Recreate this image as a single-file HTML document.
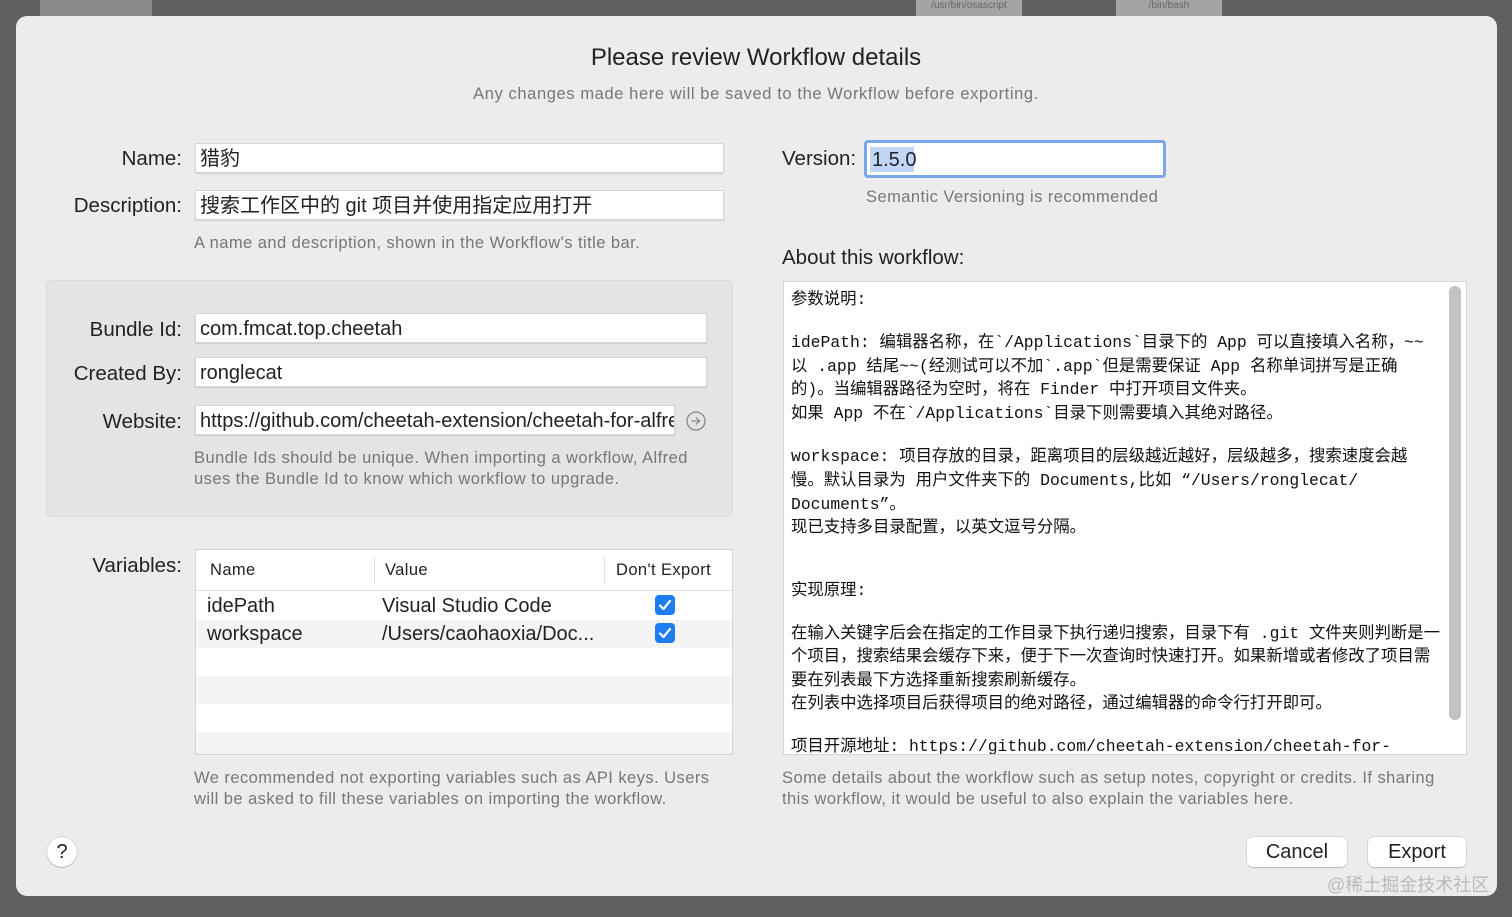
<!DOCTYPE html>
<html><head><meta charset="utf-8"><style>
*{margin:0;padding:0;box-sizing:border-box}
body{width:1512px;height:917px;background:#5f5f61;position:relative;overflow:hidden;font-family:"Liberation Sans","Noto Sans CJK SC",sans-serif;color:#222}
.a{position:absolute;white-space:nowrap}
.dlg{position:absolute;left:16px;top:16px;width:1481px;height:880px;background:#ececec;border-radius:11px}
.lbl{position:absolute;font-size:20.5px;color:#222;text-align:right;width:180px}
.inp{position:absolute;background:#fff;border:1px solid #d6d6d6;box-shadow:0 1px 1px rgba(0,0,0,.12);font-size:20px;padding-left:4px;line-height:30px;overflow:hidden;white-space:nowrap}
.help{position:absolute;font-size:16.5px;letter-spacing:.45px;color:#777;line-height:21px}
.m{position:absolute;left:791px;font-family:"Liberation Mono","Noto Sans CJK SC",monospace;font-size:16.4px;white-space:nowrap;line-height:24px;color:#111}
.btn{position:absolute;background:#fff;border-radius:6px;box-shadow:0 0 0 .5px rgba(0,0,0,.15),0 1px 1px rgba(0,0,0,.15);font-size:20px;text-align:center;line-height:30px;color:#222}
.cb{position:absolute;width:20px;height:20px;background:#1e7cf4;border-radius:4px}
</style></head><body>
<div class="a" style="left:40px;top:0;width:112px;height:16px;background:#8a8a8c"></div>
<div class="a" style="left:916px;top:0;width:106px;height:16px;background:#a4a4a4;font-size:10px;color:#666;text-align:center;line-height:12px">/usr/bin/osascript</div>
<div class="a" style="left:1116px;top:0;width:106px;height:16px;background:#a4a4a4;font-size:10px;color:#666;text-align:center;line-height:12px">/bin/bash</div>
<div class="dlg"></div>
<div class="a" style="left:0;width:1512px;top:44px;text-align:center;font-size:24px;color:#222">Please review Workflow details</div>
<div class="a" style="left:0;width:1512px;top:85px;text-align:center;font-size:16.5px;letter-spacing:.6px;color:#777">Any changes made here will be saved to the Workflow before exporting.</div>

<div class="lbl" style="left:2px;top:147px">Name:</div>
<div class="inp" style="left:195px;top:143px;width:529px;height:30px">猎豹</div>
<div class="lbl" style="left:2px;top:194px">Description:</div>
<div class="inp" style="left:195px;top:190px;width:529px;height:30px">搜索工作区中的 git 项目并使用指定应用打开</div>
<div class="help" style="left:194px;top:233px">A name and description, shown in the Workflow's title bar.</div>

<div class="a" style="left:46px;top:280px;width:687px;height:237px;background:#e4e4e4;border:1px solid #dadada;border-radius:5px"></div>
<div class="lbl" style="left:2px;top:318px">Bundle Id:</div>
<div class="inp" style="left:195px;top:313px;width:512px;height:30px">com.fmcat.top.cheetah</div>
<div class="lbl" style="left:2px;top:362px">Created By:</div>
<div class="inp" style="left:195px;top:357px;width:512px;height:30px">ronglecat</div>
<div class="lbl" style="left:2px;top:410px">Website:</div>
<div class="inp" style="left:195px;top:405px;width:480px;height:30px">https://github.com/cheetah-extension/cheetah-for-alfred</div>
<svg class="a" style="left:685px;top:410px" width="22" height="22" viewBox="0 0 22 22"><circle cx="11" cy="11" r="9" fill="none" stroke="#888" stroke-width="1.3"/><path d="M6.5 11h8M11 7.5l3.5 3.5-3.5 3.5" fill="none" stroke="#888" stroke-width="1.3"/></svg>
<div class="help" style="left:194px;top:448px">Bundle Ids should be unique. When importing a workflow, Alfred<br>uses the Bundle Id to know which workflow to upgrade.</div>

<div class="lbl" style="left:2px;top:554px">Variables:</div>
<div class="a" style="left:195px;top:549px;width:538px;height:206px;background:#fff;border:1px solid #d4d4d4"></div>
<div class="a" style="left:196px;top:590px;width:536px;height:1px;background:#e2e2e2"></div>
<div class="a" style="left:196px;top:620px;width:536px;height:28px;background:#f4f4f4"></div>
<div class="a" style="left:196px;top:676px;width:536px;height:28px;background:#f4f4f4"></div>
<div class="a" style="left:196px;top:732px;width:536px;height:22px;background:#f4f4f4"></div>
<div class="a" style="left:374px;top:556px;width:1px;height:28px;background:#e4e4e4"></div>
<div class="a" style="left:604px;top:556px;width:1px;height:28px;background:#e4e4e4"></div>
<div class="a" style="left:210px;top:561px;font-size:16.5px;letter-spacing:.4px">Name</div>
<div class="a" style="left:385px;top:561px;font-size:16.5px;letter-spacing:.4px">Value</div>
<div class="a" style="left:616px;top:561px;font-size:16.5px;letter-spacing:.4px">Don't Export</div>
<div class="a" style="left:207px;top:595px;font-size:20px">idePath</div>
<div class="a" style="left:382px;top:595px;font-size:20px">Visual Studio Code</div>
<div class="a" style="left:207px;top:623px;font-size:20px">workspace</div>
<div class="a" style="left:382px;top:623px;font-size:20px">/Users/caohaoxia/Doc...</div>
<div class="cb" style="left:655px;top:595px"><svg width="20" height="20"><path d="M5 10.5l3.5 3.5 6.5-8" fill="none" stroke="#fff" stroke-width="2.2" stroke-linecap="round" stroke-linejoin="round"/></svg></div>
<div class="cb" style="left:655px;top:623px"><svg width="20" height="20"><path d="M5 10.5l3.5 3.5 6.5-8" fill="none" stroke="#fff" stroke-width="2.2" stroke-linecap="round" stroke-linejoin="round"/></svg></div>
<div class="help" style="left:194px;top:768px">We recommended not exporting variables such as API keys. Users<br>will be asked to fill these variables on importing the workflow.</div>

<div class="a" style="left:782px;top:147px;font-size:20.5px">Version:</div>
<div class="a" style="left:864px;top:140px;width:302px;height:38px;border:3px solid #7aa7ec;border-radius:4px;background:#fff"></div>
<div class="a" style="left:870px;top:147px;width:44px;height:25px;background:#bfd6f6"></div>
<div class="a" style="left:872px;top:148px;font-size:20px;line-height:24px">1.5.0</div>
<div class="help" style="left:866px;top:187px">Semantic Versioning is recommended</div>
<div class="a" style="left:782px;top:246px;font-size:20.5px">About this workflow:</div>
<div class="a" style="left:783px;top:281px;width:684px;height:474px;background:#fff;border:1px solid #d6d6d6;overflow:hidden"></div>
<div class="a" style="left:1449px;top:286px;width:12px;height:434px;background:#c2c2c2;border-radius:6px"></div>
<div class="m" style="top:288px">参数说明:</div>
<div class="m" style="top:331px">idePath: 编辑器名称，在`/Applications`目录下的 App 可以直接填入名称，~~</div>
<div class="m" style="top:355px">以 .app 结尾~~(经测试可以不加`.app`但是需要保证 App 名称单词拼写是正确</div>
<div class="m" style="top:378px">的)。当编辑器路径为空时，将在 Finder 中打开项目文件夹。</div>
<div class="m" style="top:402px">如果 App 不在`/Applications`目录下则需要填入其绝对路径。</div>
<div class="m" style="top:445px">workspace: 项目存放的目录，距离项目的层级越近越好，层级越多，搜索速度会越</div>
<div class="m" style="top:469px">慢。默认目录为 用户文件夹下的 Documents,比如 “/Users/ronglecat/</div>
<div class="m" style="top:493px">Documents”。</div>
<div class="m" style="top:516px">现已支持多目录配置，以英文逗号分隔。</div>
<div class="m" style="top:579px">实现原理:</div>
<div class="m" style="top:622px">在输入关键字后会在指定的工作目录下执行递归搜索，目录下有 .git 文件夹则判断是一</div>
<div class="m" style="top:645px">个项目，搜索结果会缓存下来，便于下一次查询时快速打开。如果新增或者修改了项目需</div>
<div class="m" style="top:669px">要在列表最下方选择重新搜索刷新缓存。</div>
<div class="m" style="top:692px">在列表中选择项目后获得项目的绝对路径，通过编辑器的命令行打开即可。</div>
<div class="a" style="left:784px;top:735px;width:660px;height:19px;overflow:hidden"><div class="m" style="left:7px;top:0">项目开源地址: https://github.com/cheetah-extension/cheetah-for-</div></div>
<div class="help" style="left:782px;top:768px">Some details about the workflow such as setup notes, copyright or credits. If sharing<br>this workflow, it would be useful to also explain the variables here.</div>

<div class="a" style="left:47px;top:837px;width:30px;height:30px;border-radius:50%;background:#fff;box-shadow:0 0 0 .5px rgba(0,0,0,.2),0 1px 1px rgba(0,0,0,.15);text-align:center;line-height:30px;font-size:20px">?</div>
<div class="btn" style="left:1247px;top:837px;width:100px;height:30px">Cancel</div>
<div class="btn" style="left:1368px;top:837px;width:98px;height:30px">Export</div>
<div class="a" style="left:1327px;top:871px;font-size:18px;color:#bbb">@稀土掘金技术社区</div>
</body></html>
